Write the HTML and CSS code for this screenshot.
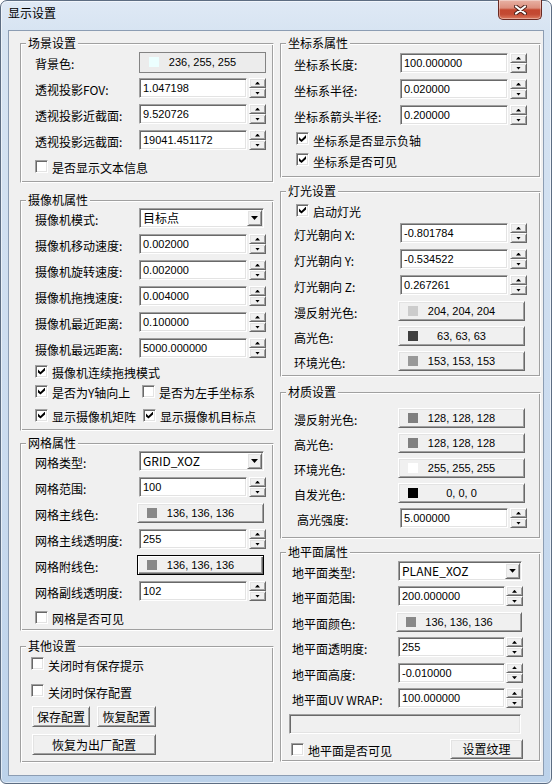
FILE: index.html
```html
<!DOCTYPE html>
<html lang="zh-CN">
<head>
<meta charset="utf-8">
<title>显示设置</title>
<link rel="stylesheet" href="styles.css">
</head>
<body>
<div class="window">
  <div class="titlebar">
    <span class="title">显示设置</span>
    <div class="close">
      <svg width="13" height="10" viewBox="0 0 13 10"><path d="M2 1.5L11 8.5M11 1.5L2 8.5" stroke="#4b2019" stroke-width="4" stroke-linecap="round"/><path d="M2 1.5L11 8.5M11 1.5L2 8.5" stroke="#ffffff" stroke-width="2.2" stroke-linecap="round"/></svg>
    </div>
  </div>
  <div class="client">
    <div class="col col-left">
      <div class="group gl g-scene">
        <span class="gt">场景设置</span>
        <div class="row"><span class="lbl">背景色:</span><div class="cbtn flat"><i class="sw" style="background:rgb(236,255,255)"></i><span>236, 255, 255</span></div></div>
        <div class="row"><span class="lbl">透视投影FOV:</span><div class="edit">1.047198</div><div class="spin"><b class="sb up"></b><b class="sb dn"></b></div></div>
        <div class="row"><span class="lbl">透视投影近截面:</span><div class="edit">9.520726</div><div class="spin"><b class="sb up"></b><b class="sb dn"></b></div></div>
        <div class="row"><span class="lbl">透视投影远截面:</span><div class="edit">19041.451172</div><div class="spin"><b class="sb up"></b><b class="sb dn"></b></div></div>
        <div class="row"><label class="chk"><i class="cb"></i><span class="t">是否显示文本信息</span></label></div>
      </div>

      <div class="group gl g-camera">
        <span class="gt">摄像机属性</span>
        <div class="row"><span class="lbl">摄像机模式:</span><div class="combo"><span class="ct">目标点</span><b class="dd"></b></div></div>
        <div class="row"><span class="lbl">摄像机移动速度:</span><div class="edit">0.002000</div><div class="spin"><b class="sb up"></b><b class="sb dn"></b></div></div>
        <div class="row"><span class="lbl">摄像机旋转速度:</span><div class="edit">0.002000</div><div class="spin"><b class="sb up"></b><b class="sb dn"></b></div></div>
        <div class="row"><span class="lbl">摄像机拖拽速度:</span><div class="edit">0.004000</div><div class="spin"><b class="sb up"></b><b class="sb dn"></b></div></div>
        <div class="row"><span class="lbl">摄像机最近距离:</span><div class="edit">0.100000</div><div class="spin"><b class="sb up"></b><b class="sb dn"></b></div></div>
        <div class="row"><span class="lbl">摄像机最远距离:</span><div class="edit">5000.000000</div><div class="spin"><b class="sb up"></b><b class="sb dn"></b></div></div>
        <div class="row crow"><label class="chk"><i class="cb on"></i><span class="t">摄像机连续拖拽模式</span></label></div>
        <div class="row crow"><label class="chk w107"><i class="cb on"></i><span class="t">是否为Y轴向上</span></label><label class="chk"><i class="cb"></i><span class="t">是否为左手坐标系</span></label></div>
        <div class="row crow mt4"><label class="chk w108"><i class="cb on"></i><span class="t">显示摄像机矩阵</span></label><label class="chk"><i class="cb on"></i><span class="t">显示摄像机目标点</span></label></div>
      </div>

      <div class="group gl g-grid">
        <span class="gt">网格属性</span>
        <div class="row"><span class="lbl">网格类型:</span><div class="combo"><span class="ct">GRID_XOZ</span><b class="dd"></b></div></div>
        <div class="row"><span class="lbl">网格范围:</span><div class="edit">100</div><div class="spin"><b class="sb up"></b><b class="sb dn"></b></div></div>
        <div class="row"><span class="lbl">网格主线色:</span><div class="cbtn"><i class="sw" style="background:rgb(136,136,136)"></i><span>136, 136, 136</span></div></div>
        <div class="row"><span class="lbl">网格主线透明度:</span><div class="edit">255</div><div class="spin"><b class="sb up"></b><b class="sb dn"></b></div></div>
        <div class="row"><span class="lbl">网格附线色:</span><div class="cbtn def"><i class="sw" style="background:rgb(136,136,136)"></i><span>136, 136, 136</span></div></div>
        <div class="row"><span class="lbl">网格副线透明度:</span><div class="edit">102</div><div class="spin"><b class="sb up"></b><b class="sb dn"></b></div></div>
        <div class="row"><label class="chk"><i class="cb"></i><span class="t">网格是否可见</span></label></div>
      </div>

      <div class="group g-other">
        <span class="gt">其他设置</span>
        <div class="row r27"><label class="chk"><i class="cb"></i><span class="t">关闭时有保存提示</span></label></div>
        <div class="row r27"><label class="chk"><i class="cb"></i><span class="t">关闭时保存配置</span></label></div>
        <div class="btnrow mt2"><div class="btn w58">保存配置</div><div class="btn w59">恢复配置</div></div>
        <div class="btnrow mt7"><div class="btn w124">恢复为出厂配置</div></div>
      </div>
    </div>

    <div class="col col-right">
      <div class="group gr g-axis">
        <span class="gt">坐标系属性</span>
        <div class="row"><span class="lbl">坐标系长度:</span><div class="edit">100.000000</div><div class="spin"><b class="sb up"></b><b class="sb dn"></b></div></div>
        <div class="row"><span class="lbl">坐标系半径:</span><div class="edit">0.020000</div><div class="spin"><b class="sb up"></b><b class="sb dn"></b></div></div>
        <div class="row"><span class="lbl">坐标系箭头半径:</span><div class="edit">0.200000</div><div class="spin"><b class="sb up"></b><b class="sb dn"></b></div></div>
        <div class="row r21"><label class="chk"><i class="cb on"></i><span class="t">坐标系是否显示负轴</span></label></div>
        <div class="row r21"><label class="chk"><i class="cb on"></i><span class="t">坐标系是否可见</span></label></div>
      </div>

      <div class="group gr g-light">
        <span class="gt">灯光设置</span>
        <div class="row crow"><label class="chk"><i class="cb on"></i><span class="t">启动灯光</span></label></div>
        <div class="row"><span class="lbl">灯光朝向 X:</span><div class="edit">-0.801784</div><div class="spin"><b class="sb up"></b><b class="sb dn"></b></div></div>
        <div class="row"><span class="lbl">灯光朝向 Y:</span><div class="edit">-0.534522</div><div class="spin"><b class="sb up"></b><b class="sb dn"></b></div></div>
        <div class="row"><span class="lbl">灯光朝向 Z:</span><div class="edit">0.267261</div><div class="spin"><b class="sb up"></b><b class="sb dn"></b></div></div>
        <div class="row r25"><span class="lbl">漫反射光色:</span><div class="cbtn"><i class="sw" style="background:rgb(204,204,204)"></i><span>204, 204, 204</span></div></div>
        <div class="row r25"><span class="lbl">高光色:</span><div class="cbtn"><i class="sw" style="background:rgb(63,63,63)"></i><span>63, 63, 63</span></div></div>
        <div class="row r25"><span class="lbl">环境光色:</span><div class="cbtn"><i class="sw" style="background:rgb(153,153,153)"></i><span>153, 153, 153</span></div></div>
      </div>

      <div class="group gr g-mat">
        <span class="gt">材质设置</span>
        <div class="row r25"><span class="lbl">漫反射光色:</span><div class="cbtn"><i class="sw" style="background:rgb(128,128,128)"></i><span>128, 128, 128</span></div></div>
        <div class="row r25"><span class="lbl">高光色:</span><div class="cbtn"><i class="sw" style="background:rgb(128,128,128)"></i><span>128, 128, 128</span></div></div>
        <div class="row r25"><span class="lbl">环境光色:</span><div class="cbtn"><i class="sw" style="background:rgb(255,255,255)"></i><span>255, 255, 255</span></div></div>
        <div class="row r25"><span class="lbl">自发光色:</span><div class="cbtn"><i class="sw" style="background:rgb(0,0,0)"></i><span>0, 0, 0</span></div></div>
        <div class="row"><span class="lbl ind">高光强度:</span><div class="edit">5.000000</div><div class="spin"><b class="sb up"></b><b class="sb dn"></b></div></div>
      </div>

      <div class="group g-ground">
        <span class="gt">地平面属性</span>
        <div class="row"><span class="lbl">地平面类型:</span><div class="combo"><span class="ct">PLANE_XOZ</span><b class="dd"></b></div></div>
        <div class="row"><span class="lbl">地平面范围:</span><div class="edit">200.000000</div><div class="spin"><b class="sb up"></b><b class="sb dn"></b></div></div>
        <div class="row"><span class="lbl">地平面颜色:</span><div class="cbtn"><i class="sw" style="background:rgb(136,136,136)"></i><span>136, 136, 136</span></div></div>
        <div class="row"><span class="lbl">地平面透明度:</span><div class="edit">255</div><div class="spin"><b class="sb up"></b><b class="sb dn"></b></div></div>
        <div class="row"><span class="lbl">地平面高度:</span><div class="edit">-0.010000</div><div class="spin"><b class="sb up"></b><b class="sb dn"></b></div></div>
        <div class="row"><span class="lbl">地平面UV WRAP:</span><div class="edit">100.000000</div><div class="spin"><b class="sb up"></b><b class="sb dn"></b></div></div>
        <div class="row"><div class="field"></div></div>
        <div class="row"><label class="chk"><i class="cb"></i><span class="t">地平面是否可见</span></label><div class="btn tex">设置纹理</div></div>
      </div>
    </div>
  </div>
</div>
</body>
</html>
```

FILE: styles.css
```css
* { box-sizing: border-box; }
html, body { margin: 0; padding: 0; }
body {
  width: 552px;
  height: 784px;
  overflow: hidden;
  background: #ffffff;
  font-family: "Noto Sans CJK SC", "Liberation Sans", sans-serif;
  font-size: 12px;
  color: #000;
}

/* window frame */
.window {
  width: 552px;
  height: 784px;
  border: 1px solid #5d6d82;
  border-radius: 7px 7px 6px 6px;
  background: linear-gradient(to bottom, #dfe9f5 0px, #d7e4f2 30px, #cadbef 60%, #bcd2ea 100%);
  box-shadow: inset 0 0 0 1px rgba(255, 255, 255, 0.55);
  display: flex;
  flex-direction: column;
}
.titlebar {
  flex: none;
  height: 29px;
  display: flex;
  justify-content: space-between;
  align-items: flex-start;
  padding-left: 7px;
}
.title {
  margin-top: 4px;
  line-height: 16px;
  font-size: 12px;
}
.close {
  width: 44px;
  height: 20px;
  margin: -1px 9px 0 0;
  border: 1px solid #6a2a22;
  border-top: none;
  border-radius: 0 0 5px 5px;
  background: linear-gradient(to bottom, #e8b2a5 0%, #dc8f7e 42%, #c4472f 52%, #c34a33 75%, #dc7a5f 100%);
  box-shadow: inset 0 0 0 1px rgba(255, 255, 255, 0.35);
  display: flex;
  align-items: center;
  justify-content: center;
}
.client {
  flex: none;
  height: 746px;
  margin: 0 7px;
  border: 1px solid #8c9db3;
  background: #f0f0f0;
  display: flex;
  align-items: flex-start;
  gap: 6px;
  padding: 12px 0 0 11px;
}
.col {
  flex: none;
  display: flex;
  flex-direction: column;
}
.col-left { width: 254px; }
.col-right { width: 261px; }

/* group boxes (etched) */
.group {
  position: relative;
  flex: none;
  display: flex;
  flex-direction: column;
  border: 1px solid;
  border-color: #a0a0a0 #ffffff #ffffff #a0a0a0;
  box-shadow: inset 1px 1px 0 #ffffff, inset -1px -1px 0 #a0a0a0;
}
.gt {
  position: absolute;
  top: -8px;
  left: 5px;
  padding: 0 2px;
  background: #f0f0f0;
  line-height: 14px;
  white-space: nowrap;
}
.gl { padding-left: 14px; }
.gr { padding-left: 13px; }

.g-scene { height: 140px; padding-top: 5px; }
.g-camera { height: 231px; margin-top: 17px; padding-top: 4px; }
.g-grid { height: 188px; margin-top: 12px; padding-top: 4px; }
.g-other { height: 117px; margin-top: 15px; padding-top: 3px; padding-left: 10px; }
.g-axis { height: 135px; padding-top: 6px; }
.g-light { height: 186px; margin-top: 13px; padding-top: 8px; }
.g-mat { height: 147px; margin-top: 15px; padding-top: 12px; }
.g-ground { height: 210px; margin-top: 13px; padding-top: 5px; padding-left: 11px; }

/* rows */
.row {
  flex: none;
  display: flex;
  align-items: center;
  height: 26px;
}
.crow { height: 20px; }
.r21 { height: 21px; }
.r25 { height: 25px; }
.r27 { height: 27px; }
.g-ground .row { height: 25.5px; }
.mt2 { margin-top: 2px; }
.mt4 { margin-top: 4px; }
.mt7 { margin-top: 7px; }

.lbl {
  flex: none;
  width: 104px;
  margin-top: 4px;
  line-height: 14px;
  white-space: nowrap;
}
.gr .lbl, .g-ground .lbl { width: 106px; }
.lbl.ind { padding-left: 3px; }

/* edit box (sunken) */
.edit, .field, .combo {
  flex: none;
  height: 20px;
  background: #ffffff;
  border: 1px solid;
  border-color: #a0a0a0 #ffffff #ffffff #a0a0a0;
  box-shadow: inset 1px 1px 0 #696969, inset -1px -1px 0 #e3e3e3;
}
.edit {
  width: 108px;
  display: flex;
  align-items: center;
  padding-left: 3px;
  font-family: "Liberation Sans", sans-serif;
  font-size: 11px;
  line-height: 16px;
}
.g-ground .edit { width: 107px; }
.field {
  width: 232px;
  margin-left: -3px;
  background: #f0f0f0;
}

/* spin buttons */
.spin {
  flex: none;
  width: 17px;
  height: 20px;
  margin-left: 2px;
  display: flex;
  flex-direction: column;
}
.g-ground .spin { margin-left: 1px; }
.sb, .dd, .btn, .cbtn {
  background: #f0f0f0;
  border: 1px solid;
  border-color: #ffffff #696969 #696969 #ffffff;
  box-shadow: inset 1px 1px 0 #e3e3e3, inset -1px -1px 0 #a0a0a0;
}
.sb {
  flex: 1;
  display: flex;
  align-items: center;
  justify-content: center;
}
.sb::before {
  content: "";
  width: 5px;
  height: 3px;
  background: #000;
}
.sb.up::before { clip-path: polygon(50% 0, 100% 100%, 0 100%); }
.sb.dn::before { clip-path: polygon(0 0, 100% 0, 50% 100%); }

/* combo box */
.combo {
  width: 125px;
  display: flex;
  align-items: center;
  padding: 0 1px 0 3px;
}
.g-ground .combo { width: 124px; }
.ct {
  flex: 1;
  line-height: 14px;
  white-space: nowrap;
}
.dd {
  flex: none;
  width: 15px;
  height: 16px;
  display: flex;
  align-items: center;
  justify-content: center;
}
.dd::before {
  content: "";
  width: 7px;
  height: 4px;
  background: #000;
  clip-path: polygon(0 0, 100% 0, 50% 100%);
}

/* colour buttons */
.cbtn {
  flex: none;
  width: 127px;
  height: 20px;
  margin-left: -2px;
  display: grid;
  grid-template-columns: 1fr auto 1fr;
  align-items: center;
  font-family: "Liberation Sans", sans-serif;
  font-size: 11px;
  line-height: 14px;
  white-space: nowrap;
}
.g-ground .cbtn { width: 126px; }
.cbtn.flat {
  margin-left: 0;
  height: 21px;
  border: 1px solid #838383;
  box-shadow: none;
  background: #ececec;
}
.cbtn.def {
  border: 1px solid #000000;
  box-shadow: inset 1px 1px 0 #ffffff, inset -1px -1px 0 #696969, inset -2px -2px 0 #a0a0a0;
}
.sw {
  justify-self: start;
  width: 10px;
  height: 10px;
  margin-left: 9px;
}

/* check boxes */
.chk {
  flex: none;
  display: flex;
  align-items: center;
  white-space: nowrap;
}
.gr .chk { margin-left: 2px; }
.g-ground .chk { margin-left: -1px; }
.w107 { width: 107px; }
.w108 { width: 108px; }
.cb {
  flex: none;
  width: 13px;
  height: 13px;
  background: #ffffff;
  border: 1px solid;
  border-color: #a0a0a0 #ffffff #ffffff #a0a0a0;
  box-shadow: inset 1px 1px 0 #696969, inset -1px -1px 0 #e3e3e3;
  display: flex;
  align-items: center;
  justify-content: center;
}
.cb.on::before {
  content: "";
  width: 7px;
  height: 7px;
  background: #000;
  clip-path: polygon(0 2px, 2.5px 4.5px, 7px 0, 7px 3px, 2.5px 7px, 0 5px);
}
.t {
  margin-left: 4px;
  margin-top: 4px;
  line-height: 14px;
}

/* push buttons */
.btnrow {
  flex: none;
  display: flex;
  gap: 7px;
  margin-left: 1px;
}
.btn {
  flex: none;
  height: 21px;
  display: flex;
  align-items: center;
  justify-content: center;
  line-height: 14px;
  white-space: nowrap;
}
.w58 { width: 58px; }
.w59 { width: 59px; }
.w124 { width: 124px; }
.btn.tex {
  width: 73px;
  height: 20px;
  margin-left: auto;
  margin-right: 17px;
}
```
